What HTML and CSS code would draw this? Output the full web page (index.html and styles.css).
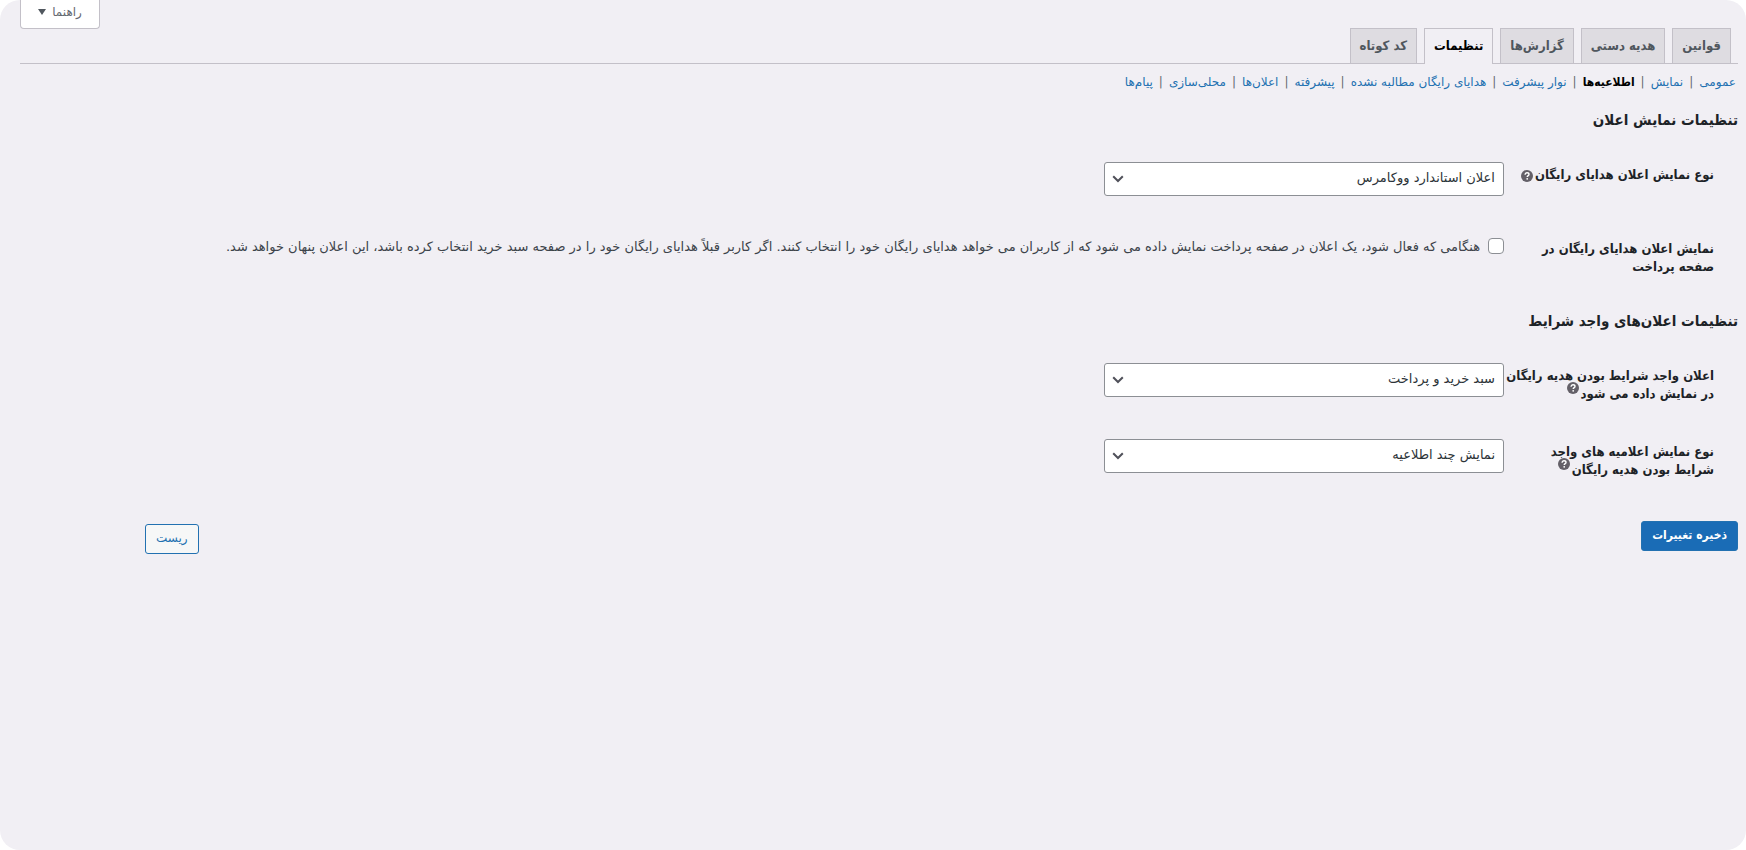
FILE: index.html
```
<!DOCTYPE html>
<html lang="fa" dir="rtl">
<head>
    <meta charset="UTF-8">
    <meta name="viewport" content="width=device-width, initial-scale=1.0">
    <title>تنظیمات</title>
    <link rel="stylesheet" href="styles.css">
</head>
<body>
    <svg class="sprite" aria-hidden="true">
        <symbol id="help" viewBox="0 0 12 12">
            <circle cx="6" cy="6" r="6" fill="#646068"/>
            <path d="M4.1 4.7C4.1 3.3 5 2.7 6.1 2.7S8 3.4 8 4.4C8 5.6 6.2 5.7 6.2 7" fill="none" stroke="#fff" stroke-width="1.4"/>
            <circle cx="6.2" cy="8.8" r=".9" fill="#fff"/>
        </symbol>
        <symbol id="chevron" viewBox="0 0 12 8">
            <path d="M1.2 1.2 6 6l4.8-4.8" fill="none" stroke="#50515a" stroke-width="2"/>
        </symbol>
    </svg>

    <div class="page">
        <button type="button" class="help-tab">راهنما <span class="arrow"></span></button>

        <nav class="tabs">
            <a href="#">قوانین</a>
            <a href="#">هدیه دستی</a>
            <a href="#">گزارش‌ها</a>
            <a href="#" class="active">تنظیمات</a>
            <a href="#">کد کوتاه</a>
        </nav>

        <ul class="subnav">
            <li><a href="#">عمومی</a></li>
            <li><a href="#">نمایش</a></li>
            <li><a href="#" class="current">اطلاعیه‌ها</a></li>
            <li><a href="#">نوار پیشرفت</a></li>
            <li><a href="#">هدایای رایگان مطالبه نشده</a></li>
            <li><a href="#">پیشرفته</a></li>
            <li><a href="#">اعلان‌ها</a></li>
            <li><a href="#">محلی‌سازی</a></li>
            <li><a href="#">پیام‌ها</a></li>
        </ul>

        <form>
            <h2>تنظیمات نمایش اعلان</h2>
            <div class="row">
                <label class="title" for="notice-type">نوع نمایش اعلان هدایای رایگان<svg class="tip"><use href="#help"/></svg></label>
                <div class="select">
                    <select id="notice-type"><option>اعلان استاندارد ووکامرس</option></select>
                    <svg class="chevron"><use href="#chevron"/></svg>
                </div>
            </div>
            <div class="row row-check">
                <span class="title">نمایش اعلان هدایای رایگان در<br>صفحه پرداخت</span>
                <label class="check">
                    <input type="checkbox">
                    <span>هنگامی که فعال شود، یک اعلان در صفحه پرداخت نمایش داده می شود که از کاربران می خواهد هدایای رایگان خود را انتخاب کنند. اگر کاربر قبلاً هدایای رایگان خود را در صفحه سبد خرید انتخاب کرده باشد، این اعلان پنهان خواهد شد.</span>
                </label>
            </div>

            <h2>تنظیمات اعلان‌های واجد شرایط</h2>
            <div class="row">
                <label class="title" for="notice-place">اعلان واجد شرایط بودن هدیه رایگان<br>در نمایش داده می شود<svg class="tip raised"><use href="#help"/></svg></label>
                <div class="select">
                    <select id="notice-place"><option>سبد خرید و پرداخت</option></select>
                    <svg class="chevron"><use href="#chevron"/></svg>
                </div>
            </div>
            <div class="row">
                <label class="title" for="notice-count">نوع نمایش اعلامیه های واجد<br>شرایط بودن هدیه رایگان<svg class="tip raised"><use href="#help"/></svg></label>
                <div class="select">
                    <select id="notice-count"><option>نمایش چند اطلاعیه</option></select>
                    <svg class="chevron"><use href="#chevron"/></svg>
                </div>
            </div>

            <div class="actions">
                <button type="submit" class="save">ذخیره تغییرات</button>
                <button type="reset" class="reset">ریست</button>
            </div>
        </form>
    </div>
</body>
</html>
```

FILE: styles.css
```
:root {
    --bg: #f1eff4;
    --blue: #2271b1;
    --text: #1d2327;
    --muted: #3c434a;
    --line: #c3c0c8;
    --condensed: "DejaVu Sans Condensed", "DejaVu Sans", sans-serif;
}

* {
    box-sizing: border-box;
}

body {
    margin: 0;
    background: #fff;
    color: var(--muted);
    font-family: "DejaVu Sans", sans-serif;
    font-size: 13px;
    line-height: 18px;
}

button,
select {
    font: inherit;
}

a {
    color: var(--blue);
    text-decoration: none;
}

.sprite {
    display: none;
}

.page {
    position: relative;
    min-height: 100vh;
    padding: 28px 8px 20px 20px;
    background: var(--bg);
    border-radius: 20px;
}

.help-tab {
    position: absolute;
    top: 0;
    left: 20px;
    display: flex;
    align-items: center;
    justify-content: center;
    gap: 6px;
    width: 80px;
    height: 29px;
    padding: 0 0 4px;
    border: 1px solid var(--line);
    border-top: 0;
    border-radius: 0 0 4px 4px;
    background: #fff;
    color: #646970;
    font-size: 12px;
}

.arrow {
    border: 4px solid transparent;
    border-top: 6px solid #50575e;
    border-bottom: 0;
}

.tabs {
    display: flex;
    gap: 7px;
    padding-right: 7px;
    border-bottom: 1px solid var(--line);
    font-family: var(--condensed);
}

.tabs a {
    padding: 8px 9px;
    border: 1px solid var(--line);
    border-bottom: 0;
    background: #dedce1;
    color: #50575e;
    font-weight: bold;
}

.tabs .active {
    margin-bottom: -1px;
    background: var(--bg);
    color: #000;
}

.subnav {
    display: flex;
    margin: 0;
    padding: 9px 2px;
    font-size: 12px;
    list-style: none;
}

.subnav li + li::before {
    content: "|";
    margin: 0 6px;
    color: #646970;
}

.subnav .current {
    color: #000;
    font-family: var(--condensed);
    font-weight: bold;
}

h2 {
    margin: 0;
    padding: 8px 0 10px;
    color: var(--text);
    font-family: var(--condensed);
    font-size: 15px;
    line-height: 24px;
}

.row + h2 {
    padding-top: 15px;
}

.row {
    display: grid;
    grid-template-columns: 210px 1fr;
    min-height: 76px;
    padding: 20px 24px 16px 10px;
}

.row-check {
    padding-top: 18px;
}

.title {
    padding-top: 4px;
    color: var(--text);
    font-family: var(--condensed);
    font-weight: bold;
    white-space: nowrap;
}

.tip {
    width: 12px;
    height: 12px;
    margin-right: 2px;
    vertical-align: -3px;
}

.raised {
    margin-top: -12px;
    vertical-align: 4px;
}

.select {
    position: relative;
    width: 400px;
    height: 34px;
}

select {
    width: 100%;
    height: 100%;
    padding: 0 8px 2px;
    border: 1px solid #8c8f94;
    border-radius: 3px;
    background: #fff;
    color: #2c3338;
    appearance: none;
}

.chevron {
    position: absolute;
    top: 13px;
    left: 8px;
    width: 12px;
    height: 8px;
    pointer-events: none;
}

.check {
    display: flex;
    align-items: flex-start;
    gap: 8px;
    padding-top: 2px;
}

.check input {
    flex: none;
    width: 16px;
    height: 16px;
    margin: 0;
    border: 1px solid #8c8f94;
    border-radius: 4px;
    background: #fff;
    appearance: none;
}

.check input:checked {
    background: var(--blue);
}

.actions {
    display: flex;
    justify-content: space-between;
    align-items: flex-start;
    padding: 26px 0 0 125px;
}

.actions button {
    height: 30px;
    padding: 0 10px 2px;
    border: 1px solid var(--blue);
    border-radius: 3px;
    font-size: 12px;
}

.actions .save {
    background: #1a6cb6;
    color: #fff;
    font-family: var(--condensed);
    font-weight: bold;
}

.actions .reset {
    margin-top: 3px;
    background: #f6f7f7;
    color: var(--blue);
}
```
